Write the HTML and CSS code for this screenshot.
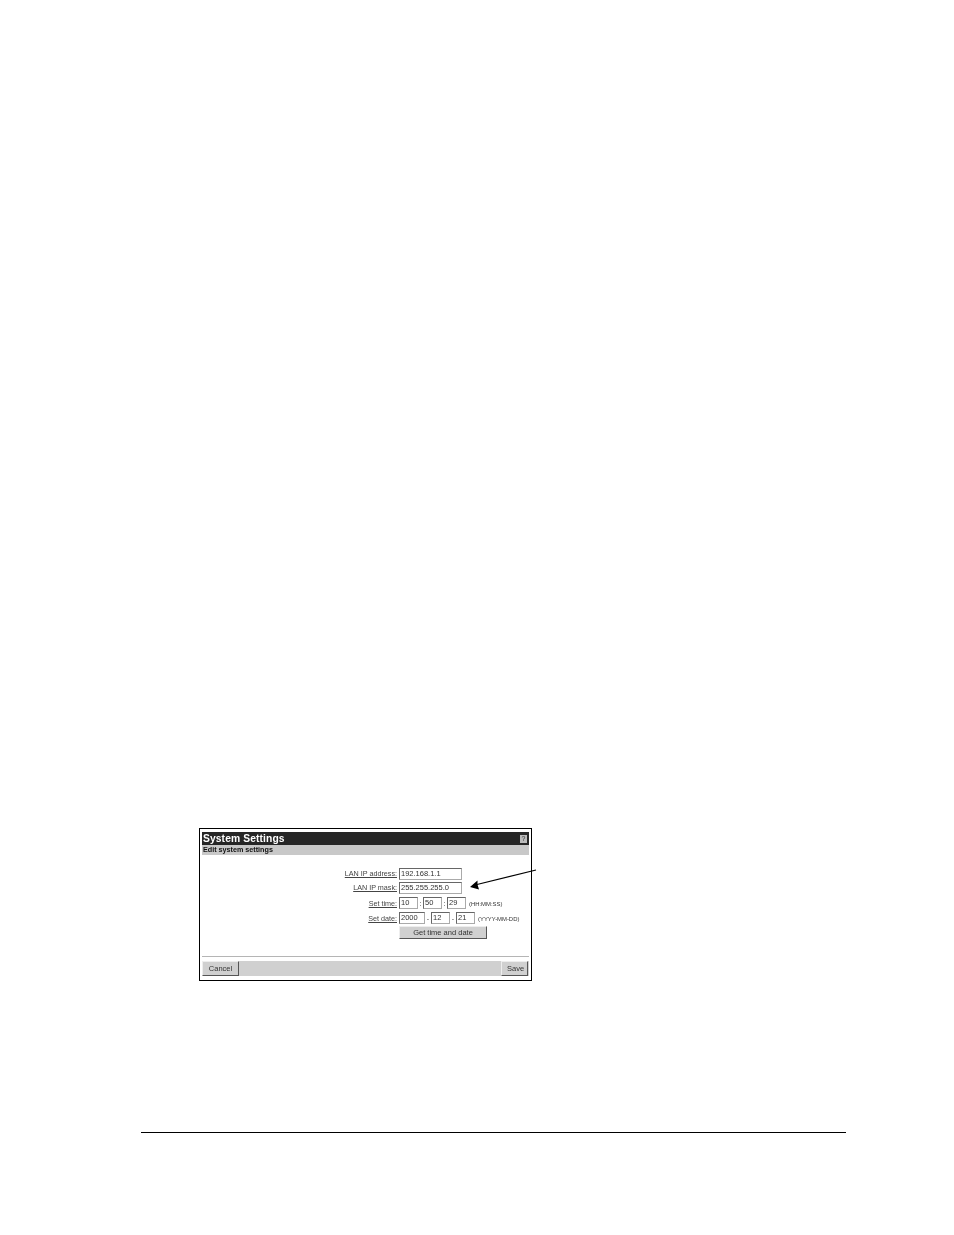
FILE: index.html
```html
<!DOCTYPE html>
<html lang="en">
<head>
<meta charset="utf-8">
<title>System Settings</title>
<link rel="stylesheet" href="styles.css">
</head>
<body>
<main class="page">
  <div class="figure">
    <section class="window">
      <header class="titlebar">
        <h1>System Settings</h1>
        <span class="help">?</span>
      </header>
      <h2 class="subtitle">Edit system settings</h2>
      <form class="form">
        <div class="row">
          <span class="label">LAN IP address:</span>
          <span class="input wide">192.168.1.1</span>
        </div>
        <div class="row">
          <span class="label">LAN IP mask:</span>
          <span class="input wide">255.255.255.0</span>
        </div>
        <div class="row">
          <span class="label lower">Set time:</span>
          <span class="group">
            <span class="input short">10</span><span class="sep">:</span>
            <span class="input short">50</span><span class="sep">:</span>
            <span class="input short">29</span>
            <span class="hint">(HH:MM:SS)</span>
          </span>
        </div>
        <div class="row">
          <span class="label lower">Set date:</span>
          <span class="group">
            <span class="input year">2000</span><span class="sep date">-</span>
            <span class="input short">12</span><span class="sep date">-</span>
            <span class="input short">21</span>
            <span class="hint">(YYYY-MM-DD)</span>
          </span>
        </div>
        <div class="row">
          <span class="label"></span>
          <span class="btn get">Get time and date</span>
        </div>
      </form>
      <footer class="footer">
        <span class="btn cancel">Cancel</span>
        <span class="btn save">Save</span>
      </footer>
    </section>
    <svg class="arrow" width="72" height="24" viewBox="0 0 72 24" aria-hidden="true">
      <line x1="68" y1="2" x2="9" y2="16.5" stroke="#000" stroke-width="1.1"/>
      <path d="M2 19 L9.5 12.5 L9.5 16.5 L11 21.5 Z" fill="#000"/>
    </svg>
  </div>
  <hr class="rule">
</main>
</body>
</html>
```
FILE: styles.css
```css
* { box-sizing: border-box; }
html, body { margin: 0; padding: 0; background: #fff; }
body { font-family: "Liberation Sans", Arial, sans-serif; }
.page {
  width: 954px;
  height: 1235px;
  padding: 828px 0 0 141px;
  overflow: hidden;
}
.figure {
  position: relative;
  width: 400px;
  margin-left: 58px;
}
.window {
  width: 333px;
  height: 153px;
  border: 1px solid #000;
  padding: 3px 2px 4px 2px;
  color: #333;
  display: flex;
  flex-direction: column;
  filter: grayscale(1) blur(0.3px);
}
.titlebar {
  height: 13px;
  background: #262626;
  display: flex;
  align-items: center;
  justify-content: space-between;
  padding: 0 2px 0 1px;
  color: #fff;
}
.titlebar h1 {
  margin: 0;
  font-size: 10.3px;
  line-height: 13px;
  font-weight: 700;
  letter-spacing: 0.1px;
}
.help {
  width: 7px;
  height: 8px;
  background: #bbb;
  color: #333;
  font-size: 7px;
  line-height: 8px;
  text-align: center;
}
.subtitle {
  margin: 0;
  height: 10px;
  background: #c8c8c8;
  padding-left: 1px;
  font-size: 7.2px;
  line-height: 10px;
  font-weight: 700;
  color: #111;
}
.form {
  flex: 1;
  padding-top: 12.5px;
  display: flex;
  flex-direction: column;
  gap: 2.7px;
  border-bottom: 1px solid #b5b5b5;
  margin-bottom: 4px;
}
.row {
  display: flex;
  align-items: flex-start;
  gap: 2px;
  height: 12px;
}
.label {
  width: 195px;
  text-align: right;
  font-size: 7.2px;
  line-height: 11px;
  text-decoration: underline;
  color: #444;
}
.label.lower { padding-top: 1px; }
.group { display: flex; align-items: flex-start; }
.input {
  display: block;
  height: 12px;
  border: 1px solid #aaa;
  border-top-color: #666;
  border-left-color: #666;
  background: #fff;
  font-size: 7.5px;
  line-height: 10px;
  padding-left: 1px;
  color: #333;
}
.wide { width: 63px; }
.short { width: 19px; }
.year { width: 26px; }
.sep {
  width: 5px;
  padding-top: 2px;
  text-align: center;
  font-size: 7px;
  line-height: 10px;
}
.sep.date { width: 6px; }
.hint {
  margin-left: 3px;
  padding-top: 2px;
  font-size: 5.9px;
  line-height: 10px;
  white-space: nowrap;
  color: #333;
}
.btn {
  display: block;
  height: 14px;
  padding: 0 5px;
  background: #d0d0d0;
  border: 1px solid #eee;
  border-right-color: #555;
  border-bottom-color: #555;
  font-size: 7.5px;
  line-height: 12px;
  text-align: center;
  color: #333;
}
.get { width: 88px; height: 13px; line-height: 11px; }
.footer {
  height: 15px;
  background: #d0d0d0;
  display: flex;
  justify-content: space-between;
  padding-right: 1px;
}
.cancel { width: 37px; height: 15px; line-height: 13px; }
.save { width: 27px; height: 15px; line-height: 13px; }
.arrow {
  position: absolute;
  left: 269px;
  top: 40px;
}
.rule {
  width: 705px;
  height: 1px;
  margin: 151px 0 0 0;
  border: 0;
  background: #000;
}
```
